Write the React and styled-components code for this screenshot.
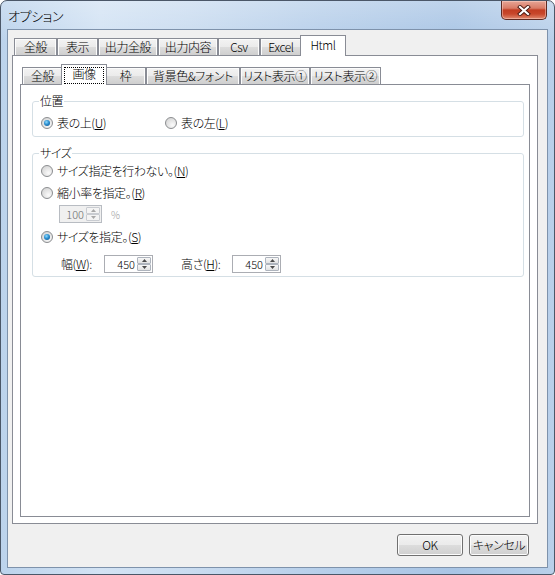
import React from 'react';
import styled, { createGlobalStyle, css } from 'styled-components';

const Global = createGlobalStyle`
  html, body { margin: 0; padding: 0; background: #fff; }
  body {
    font-family: "Noto Sans CJK JP", "Liberation Sans", sans-serif;
    font-size: 12px;
    font-weight: 300;
    letter-spacing: -0.4px;
    color: #000;
    font-feature-settings: "palt";
  }
  * { box-sizing: border-box; }
`;

const Window = styled.div`
  width: 555px;
  height: 575px;
  border: 1px solid #4b5768;
  border-radius: 7px 7px 4px 4px;
  background:
    linear-gradient(to bottom, rgba(255,255,255,0.25), rgba(255,255,255,0) 40px),
    linear-gradient(to right, #bcd3ec 0%, #d3e3f4 18%, #cadcf0 34%, #b7cfea 58%, #a9c5e5 82%, #b9d0ea 100%);
  padding: 0 6px 6px;
  display: flex;
  flex-direction: column;
  overflow: hidden;
`;

const TitleBar = styled.div`
  height: 28px;
  flex-shrink: 0;
  display: flex;
  justify-content: space-between;
  align-items: flex-start;
`;

const Title = styled.div`
  padding: 7px 0 0 1px;
  font-size: 13px;
  line-height: 16px;
  color: #000;
`;

const CloseButton = styled.div`
  width: 46px;
  height: 19px;
  margin-right: 1px;
  border: 1px solid #5e2a22;
  border-top: none;
  border-radius: 0 0 5px 5px;
  background: linear-gradient(#e7a596 0%, #d97b66 40%, #c23d22 50%, #c8472b 72%, #e08a6f 100%);
  box-shadow: inset 0 0 0 1px rgba(255,220,210,0.45);
  display: flex;
  align-items: center;
  justify-content: center;
`;

const Client = styled.div`
  flex: 1;
  border: 1px solid #7e92ab;
  background: #f0f0f0;
  display: flex;
  flex-direction: column;
  padding: 5px 9px 11px 4px;
`;

const TabControl = styled.div`
  flex: 1;
  display: flex;
  flex-direction: column;
`;

const TabStrip = styled.div`
  height: 20px;
  flex-shrink: 0;
  display: flex;
  align-items: flex-end;
  padding-left: 2px;
`;

const Tab = styled.div`
  position: relative;
  width: ${p => p.$w}px;
  height: 17px;
  border: 1px solid #898c95;
  border-bottom: none;
  background: linear-gradient(#f3f3f3, #ebebeb 50%, #dddddd 50%, #cfcfcf);
  box-shadow: inset 1px 1px 0 #fcfcfc, inset -1px 0 0 #fcfcfc;
  display: flex;
  align-items: center;
  justify-content: center;
  line-height: 14px;
  white-space: nowrap;
  ${p => p.$active && css`
    width: ${p.$w + 4}px;
    height: 21px;
    margin: 0 -2px -1px;
    background: #fff;
    box-shadow: none;
    z-index: 1;
    padding-bottom: 3px;
  `}
  ${p => p.$focus && css`
    &::after {
      content: '';
      position: absolute;
      inset: 2px 2px 1px 2px;
      border: 1px dotted #000;
    }
  `}
`;

const Panel = styled.div`
  flex: 1;
  border: 1px solid #898c95;
  background: #fff;
  display: flex;
  flex-direction: column;
  padding: ${p => p.$pad};
`;

const Group = styled.fieldset`
  margin: ${p => p.$mt || 0}px 0 0;
  border: 1px solid #d5dfe5;
  border-radius: 3px;
  padding: 0 8px ${p => p.$pb}px 8px;
  min-width: 0;
`;

const Legend = styled.legend`
  padding: 0 1px;
  margin-left: -2px;
  line-height: 14px;
  font-size: 12px;
`;

const Row = styled.div`
  display: flex;
  align-items: center;
  height: ${p => p.$h || 16}px;
  margin-top: ${p => p.$mt || 0}px;
  padding-left: ${p => p.$indent || 0}px;
`;

const Option = styled.label`
  display: inline-flex;
  align-items: center;
  gap: 4px;
  width: ${p => (p.$w ? `${p.$w}px` : 'auto')};
  line-height: 14px;
  white-space: nowrap;
`;

const RadioCircle = styled.span`
  width: 12px;
  height: 12px;
  border-radius: 50%;
  border: 1px solid #8b8d90;
  background: radial-gradient(circle at 65% 70%, #fbfbfb 0%, #e6e6e6 45%, #cfcfcf 100%);
  display: inline-flex;
  align-items: center;
  justify-content: center;
  flex-shrink: 0;
`;

const RadioDot = styled.span`
  width: 6px;
  height: 6px;
  border-radius: 50%;
  background: radial-gradient(circle at 40% 35%, #8fdcff 0%, #2c8fd0 45%, #0b4d86 100%);
`;

const SpinBox = styled.div`
  display: flex;
  width: ${p => p.$w}px;
  height: 18px;
  border: 1px solid ${p => (p.$disabled ? '#b8bcc2' : '#abadb3')};
  background: ${p => (p.$disabled ? '#f0f0f0' : '#fff')};
  color: ${p => (p.$disabled ? '#6d6d6d' : '#000')};
`;

const SpinValue = styled.div`
  flex: 1;
  text-align: right;
  padding-right: 2px;
  font-size: 11px;
  line-height: 16px;
  letter-spacing: 0;
  font-feature-settings: normal;
`;

const Spinner = styled.div`
  width: 15px;
  display: flex;
  flex-direction: column;
  padding: 1px 1px 1px 0;
`;

const SpinBtn = styled.div`
  flex: 1;
  border: 1px solid ${p => (p.$disabled ? '#c9ccd1' : '#aeb4bd')};
  border-radius: 1px;
  background: ${p => (p.$disabled ? '#f4f4f4' : 'linear-gradient(#f7f7f7, #e3e3e3)')};
  display: flex;
  align-items: center;
  justify-content: center;
`;

const Unit = styled.span`
  margin-left: 9px;
  font-size: 10px;
  color: #9a9a9a;
`;

const FieldLabel = styled.span`
  width: ${p => p.$w}px;
  white-space: nowrap;
  line-height: 14px;
`;

const Spacer = styled.span`
  width: ${p => p.$w}px;
  flex-shrink: 0;
`;

const ButtonRow = styled.div`
  flex-shrink: 0;
  margin-top: 10px;
  height: 22px;
  display: flex;
  justify-content: flex-end;
  gap: 6px;
  padding-right: 9px;
`;

const Button = styled.div`
  width: ${p => p.$w}px;
  height: 22px;
  border: 1px solid #707070;
  border-radius: 3px;
  background: linear-gradient(#f2f2f2 0%, #ebebeb 50%, #dddddd 50%, #cfcfcf 100%);
  box-shadow: inset 0 0 0 1px #fcfcfc;
  display: flex;
  align-items: center;
  justify-content: center;
  line-height: 14px;
`;

const Arrow = ({ up, disabled }) => (
  <svg width="5" height="3" viewBox="0 0 5 3">
    <path d={up ? 'M0 3 L2.5 0 L5 3 Z' : 'M0 0 L2.5 3 L5 0 Z'} fill={disabled ? '#a8a8a8' : '#4a4a4a'} />
  </svg>
);

const Spin = ({ value, w, disabled }) => (
  <SpinBox $w={w} $disabled={disabled}>
    <SpinValue>{value}</SpinValue>
    <Spinner>
      <SpinBtn $disabled={disabled}><Arrow up disabled={disabled} /></SpinBtn>
      <SpinBtn $disabled={disabled}><Arrow disabled={disabled} /></SpinBtn>
    </Spinner>
  </SpinBox>
);

const Radio = ({ checked, children, w }) => (
  <Option $w={w}>
    <RadioCircle>{checked && <RadioDot />}</RadioCircle>
    <span>{children}</span>
  </Option>
);

const outerTabs = [
  { label: '全般', w: 43 },
  { label: '表示', w: 41 },
  { label: '出力全般', w: 60 },
  { label: '出力内容', w: 60 },
  { label: 'Csv', w: 42 },
  { label: 'Excel', w: 42 },
  { label: 'Html', w: 42, active: true },
];

const innerTabs = [
  { label: '全般', w: 41 },
  { label: '画像', w: 42, active: true },
  { label: '枠', w: 41 },
  { label: '背景色&フォント', w: 94 },
  { label: 'リスト表示①', w: 70 },
  { label: 'リスト表示②', w: 71 },
];

export default function App() {
  return (
    <>
      <Global />
      <Window>
        <TitleBar>
          <Title>オプション</Title>
          <CloseButton>
            <svg width="14" height="11" viewBox="0 0 14 11">
              <path d="M3 2 L11 9 M11 2 L3 9" stroke="#4a1a12" strokeWidth="4" strokeLinecap="square" />
              <path d="M3 2 L11 9 M11 2 L3 9" stroke="#fff" strokeWidth="2.2" strokeLinecap="square" />
            </svg>
          </CloseButton>
        </TitleBar>
        <Client>
          <TabControl>
            <TabStrip>
              {outerTabs.map(t => (
                <Tab key={t.label} $w={t.w} $active={t.active}>{t.label}</Tab>
              ))}
            </TabStrip>
            <Panel $pad="8px 7px 6px 7px">
              <TabControl>
                <TabStrip>
                  {innerTabs.map(t => (
                    <Tab key={t.label} $w={t.w} $active={t.active} $focus={t.active}>{t.label}</Tab>
                  ))}
                </TabStrip>
                <Panel $pad="9px 5px 0 11px">
                  <Group $pb={5}>
                    <Legend>位置</Legend>
                    <Row $mt={7}>
                      <Radio checked w={124}>表の上(<u>U</u>)</Radio>
                      <Radio>表の左(<u>L</u>)</Radio>
                    </Row>
                  </Group>
                  <Group $mt={9} $pb={3}>
                    <Legend>サイズ</Legend>
                    <Row $mt={3}>
                      <Radio>サイズ指定を行わない。(<u>N</u>)</Radio>
                    </Row>
                    <Row $mt={6}>
                      <Radio>縮小率を指定。(<u>R</u>)</Radio>
                    </Row>
                    <Row $mt={4} $h={18} $indent={18}>
                      <Spin value="100" w={43} disabled />
                      <Unit>%</Unit>
                    </Row>
                    <Row $mt={6}>
                      <Radio checked>サイズを指定。(<u>S</u>)</Radio>
                    </Row>
                    <Row $mt={10} $h={18} $indent={20}>
                      <FieldLabel $w={43}>幅(<u>W</u>):</FieldLabel>
                      <Spin value="450" w={49} />
                      <Spacer $w={28} />
                      <FieldLabel $w={51}>高さ(<u>H</u>):</FieldLabel>
                      <Spin value="450" w={49} />
                    </Row>
                  </Group>
                </Panel>
              </TabControl>
            </Panel>
          </TabControl>
          <ButtonRow>
            <Button $w={66}>OK</Button>
            <Button $w={60}>キャンセル</Button>
          </ButtonRow>
        </Client>
      </Window>
    </>
  );
}
